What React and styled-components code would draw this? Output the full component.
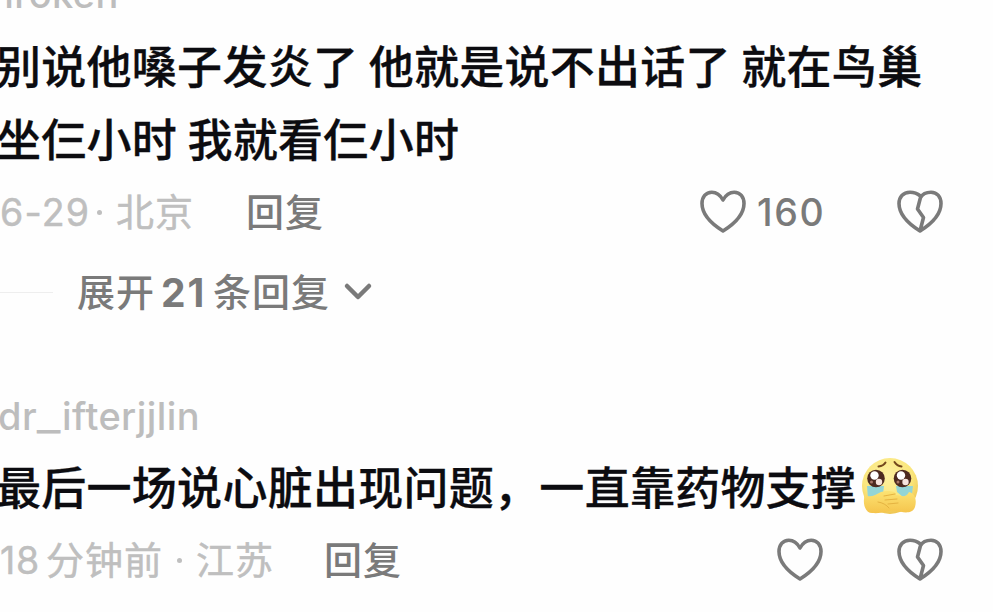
import React from 'react';
import styled, { createGlobalStyle } from 'styled-components';

const GlobalStyle = createGlobalStyle`
  * {
    box-sizing: border-box;
  }

  body {
    margin: 0;
    background: #fefefe;
    overflow: hidden;
  }
`;

const Thread = styled.main`
  width: 993px;
  height: 612px;
  overflow: hidden;
  font-family: Inter, 'Noto Sans CJK SC', sans-serif;
  white-space: nowrap;
`;

const Comment = styled.article`
  display: flex;
  flex-direction: column;
`;

const Username = styled.div`
  height: 46px;
  margin-top: ${({ $top }) => $top}px;
  margin-left: ${({ $left }) => $left}px;
  line-height: 46px;
  font-size: 38px;
  font-weight: 500;
  letter-spacing: 0.4px;
  color: #bdbdbd;
`;

const Underscore = styled.span`
  display: inline-block;
  margin: 0 4px 0 3px;
  transform: scaleX(1.35);
`;

const Message = styled.p`
  display: flex;
  flex-direction: column;
  margin: ${({ $top }) => $top}px 0 0 -4px;
  font-family: 'Noto Sans CJK SC', sans-serif;
  font-size: 45px;
  font-weight: 500;
  line-height: 73px;
  letter-spacing: 0.28px;
  color: #0c0c10;
  -webkit-text-stroke: 0.3px #0c0c10;
`;

const Line = styled.span`
  display: flex;
  align-items: center;
  height: 73px;
  white-space: pre;
`;

const Meta = styled.footer`
  display: flex;
  align-items: center;
  height: 50px;
  margin-top: ${({ $top }) => $top}px;
`;

const Label = styled.span`
  flex: none;
  width: ${({ $width }) => $width}px;
  height: 54px;
  font-family: 'Noto Sans CJK SC', sans-serif;
  font-size: 38px;
  font-weight: ${({ $dark }) => ($dark ? 500 : 400)};
  line-height: 50px;
  letter-spacing: 1px;
  color: ${({ $dark }) => ($dark ? '#7a7a7a' : '#bfbfbf')};
  -webkit-text-stroke: ${({ $dark }) => ($dark ? 0 : 0.5)}px #bfbfbf;
`;

const Digits = styled(Label)`
  height: 50px;
  font-family: Inter, sans-serif;
  font-size: ${({ $size }) => $size || 37.5}px;
  font-weight: ${({ $weight }) => $weight || 400};
  line-height: 52px;
  letter-spacing: ${({ $spacing }) => $spacing || 0}px;
`;

const Dot = styled.i`
  flex: none;
  width: 5px;
  height: 5px;
  margin: 0 ${({ $after }) => $after}px 0 ${({ $before }) => $before}px;
  border-radius: 50%;
  background: #bfbfbf;
`;

const Actions = styled.div`
  display: flex;
  align-items: center;
  margin-left: auto;
  padding-right: 49px;
`;

const Icon = styled.svg`
  display: block;
  flex: none;
  margin-right: ${({ $gap }) => $gap || 0}px;
  fill: none;
  stroke: #7a7a7a;
  stroke-linecap: round;
  stroke-linejoin: round;
`;

const Emoji = styled(Icon)`
  margin-left: 4px;
`;

const Expand = styled.div`
  display: flex;
  align-items: center;
  height: 50px;
  margin-top: 30px;
`;

const Rule = styled.i`
  width: 53px;
  height: 1px;
  margin-right: 24px;
  background: #eeeeee;
`;

const Heart = ({ gap }) => (
  <Icon $gap={gap} width="48" height="46" viewBox="0 0 48 46" strokeWidth="3.6">
    <path d="M24 11 C21 5.5 17 3.2 12.8 3.2 C6.8 3.2 3 8 3 14.5 C3 25.5 12 34.5 24 42 C36 34.5 45 25.5 45 14.5 C45 8 41.2 3.2 35.2 3.2 C31 3.2 27 5.5 24 11 Z" />
  </Icon>
);

const BrokenHeart = () => (
  <Icon width="48" height="46" viewBox="0 0 48 46" strokeWidth="3.6">
    <path d="M24.5 7 C21 4.2 18 3.2 14 3.2 C7 3.2 3 8 3 14.5 C3 25.5 12 34.5 24 42 C36 34.5 45 25.5 45 14.5 C45 8 41.2 3.2 35 3.2 C30.5 3.2 26.5 5 24.5 8.5 L21.5 20 L27.5 28.5 L24 42" />
  </Icon>
);

const Tearful = () => (
  <Emoji width="60" height="58" viewBox="0 0 60 58">
    <defs>
      <radialGradient id="face" cx="45%" cy="32%" r="68%">
        <stop offset="0" stopColor="#fdf0a0" />
        <stop offset="0.65" stopColor="#fae67c" />
        <stop offset="1" stopColor="#efc552" />
      </radialGradient>
      <linearGradient id="hand" x1="0" y1="0" x2="0" y2="1">
        <stop offset="0" stopColor="#fce373" />
        <stop offset="1" stopColor="#f5c44c" />
      </linearGradient>
    </defs>
    <g stroke="none">
      <circle cx="30" cy="29" r="28" fill="url(#face)" />
      <path d="M7 29 h17 l-1 8 -7 5 H8z M36 29 h17 l-1 8 -9 3 -6 -5z" fill="#93d5d6" />
      <circle cx="16" cy="21.5" r="8.8" fill="#4d2a20" />
      <circle cx="42.5" cy="21.5" r="8.8" fill="#4d2a20" />
      <circle cx="14.5" cy="18.5" r="4.2" fill="#fff" />
      <circle cx="41" cy="18.5" r="4.2" fill="#fff" />
      <circle cx="19" cy="25" r="3.2" fill="#f6e3dc" />
      <circle cx="45.5" cy="25" r="3.2" fill="#f6e3dc" />
      <circle cx="11.5" cy="25" r="1.5" fill="#a87767" />
      <circle cx="38" cy="25" r="1.5" fill="#a87767" />
      <path
        d="M5 37 C9 42 15 38 21 35 C27 33 37 34 36 38 C42 39 46 41 49 35 C55 36 57 43 55 50 C52 58 42 55 36 54 C29 53 23 57 12 56 C5 56 2 46 5 37Z"
        fill="url(#hand)"
      />
    </g>
    <path d="M18.5 9.5 q5 -.5 7 -4 M34.5 5 q2.5 4 7 4.5" stroke="#73471c" strokeWidth="2" />
    <path d="M24 39 l11 -2 M25 43 l12 -1 M28 47 l10 -1 M18 45 q7 1 11 6" stroke="#e5b341" strokeWidth="1" />
  </Emoji>
);

const App = () => (
  <>
    <GlobalStyle />
    <Thread>
      <Comment>
        <Username $top={-29} $left={-9}>
          hroken
        </Username>
        <Message $top={11}>
          <Line>别说他嗓子发炎了 他就是说不出话了 就在鸟巢</Line>
          <Line>坐仨小时 我就看仨小时</Line>
        </Message>
        <Meta $top={13}>
          <Digits $width={92} $spacing={1.2}>6-29</Digits>
          <Dot $before={5} $after={14} />
          <Label $width={130}>北京</Label>
          <Label $dark>回复</Label>
          <Actions>
            <Heart gap={10} />
            <Digits $dark $width={139} $weight={500} $spacing={1.6}>
              160
            </Digits>
            <BrokenHeart />
          </Actions>
        </Meta>
        <Expand>
          <Rule />
          <Label $dark $width={84}>展开</Label>
          <Digits $dark $width={52} $weight={700} $size={39} $spacing={2}>
            21
          </Digits>
          <Label $dark $width={130}>条回复</Label>
          <Icon width="30" height="20" viewBox="0 0 30 20" strokeWidth="4.5">
            <path d="M4 4 L15 15 L26 4" />
          </Icon>
        </Expand>
      </Comment>

      <Comment>
        <Username $top={76} $left={-2}>
          dr<Underscore>_</Underscore>ifterjjlin
        </Username>
        <Message $top={10}>
          <Line>
            最后一场说心脏出现问题，一直靠药物支撑
            <Tearful />
          </Line>
        </Message>
        <Meta $top={13}>
          <Digits $width={46} $spacing={0.8}>18</Digits>
          <Label $width={129}>分钟前</Label>
          <Dot $before={2} $after={14} />
          <Label $width={128}>江苏</Label>
          <Label $dark>回复</Label>
          <Actions>
            <Heart gap={72} />
            <BrokenHeart />
          </Actions>
        </Meta>
      </Comment>
    </Thread>
  </>
);

export default App;
